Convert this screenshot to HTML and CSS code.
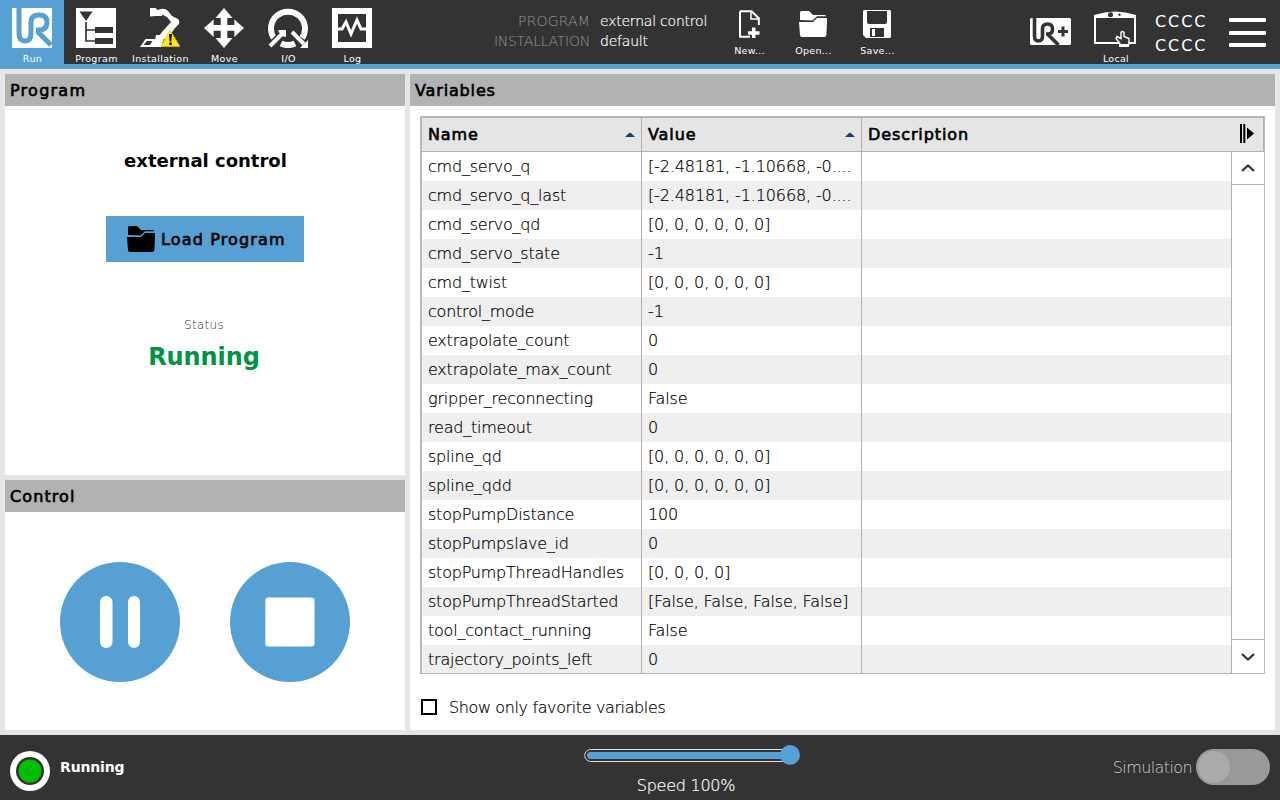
FILE: index.html
```html
<!DOCTYPE html>
<html lang="en">
<head>
<meta charset="utf-8">
<title>Run - external control</title>
<link rel="stylesheet" href="styles.css">
</head>
<body>
<svg width="0" height="0" class="defs">
  <symbol id="folder" viewBox="0 0 28 26">
    <path d="M1 9V1.500Q1 0 2.500 0H10l4 4h11q2 0 2 1.300H18L13.500 9.500z"/>
    <path d="M0 11h14l4-4h10v4l-.6 13q-.1 2-2 2H3q-2 0-2-2z"/>
  </symbol>
</svg>
<header class="topbar">
  <nav class="tabs">
    <a class="tab active"><svg viewBox="0 0 40 40"><path fill="#fff" d="M0 0h40v40H0z"/><path class="ur" d="M7 0v25q0 8 6 8t6-8V14q0-7 8-7t8 7q0 8-8 8h-3M25 23l14 14"/></svg><span>Run</span></a>
    <a class="tab"><svg viewBox="0 0 40 40"><path fill="#fff" d="M0 0h40v40H0z"/><path fill="#333" d="M3.500 3.500h13L10 13zM19 19h18v6H19zM19 30h18v6H19z"/><path d="M10 14v19h9M10 22h9" fill="none" stroke="#333" stroke-width="1.700"/></svg><span>Program</span></a>
    <a class="tab"><svg viewBox="0 0 40 40"><path d="M13 5h9" stroke="#fff" stroke-width="6"/><path fill="#fff" d="M10 0q3-1 6 0l1 2 4-1q4-1 7 2l4 5 6 3q2 2 1 5l-4 4-8 11H17l5-7 9-10-4-5-6-3-4-1-1 3-6 .5V8zM16 27h9l-2 7-4 3h-5z"/><path fill="#fff" fill-rule="evenodd" d="M5.500 31H17l2 4h4l-1 4H0zM7 33l-3.500 4H10l2.500-4z"/><path d="M30 22l10 16.500H21z" fill="#fde910" stroke="#d8c900" stroke-width=".6"/><path d="M29 26h3l-.7 7.500h-1.600zM29.300 34.500h2.500V37h-2.500z" fill="#111"/></svg><span>Installation</span></a>
    <a class="tab"><svg viewBox="0 0 40 40"><path fill="#fff" d="M20 0l8.500 10h-5.200v7h7v-5.500L40 20 30.300 29v-6.300h-7v7.300h5.200L20 40l-8.500-10h5.200v-7.300h-7V29L0 20l9.700-8.500V17h7v-7h-5.200z"/></svg><span>Move</span></a>
    <a class="tab"><svg viewBox="0 0 40 40"><path d="M5.800 30A17 17 0 1 1 34.200 30M13 35.500a17 17 0 0 0 14 0" fill="none" stroke="#fff" stroke-width="6"/><path d="M1.500 38.500L15 25" stroke="#333" stroke-width="7"/><path d="M2 38l13-13M24 24l12 12" stroke="#fff" stroke-width="4"/><path fill="#fff" d="M10.500 22H18v7l-2.500-.5-5-4.500zM40 32v8h-8z"/></svg><span>I/O</span></a>
    <a class="tab"><svg viewBox="0 0 40 40"><path fill="#fff" fill-rule="evenodd" d="M0 0h40v40H0zM6 6v28h28V6z"/><path d="M5 21h5l4-7 5 12 6-14 4 9h6" fill="none" stroke="#fff" stroke-width="3"/></svg><span>Log</span></a>
  </nav>
  <dl class="names"><dt>PROGRAM</dt><dd>external control</dd><dt class="tight">INSTALLATION</dt><dd>default</dd></dl>
  <div class="files">
    <a class="file"><svg viewBox="0 0 28 28"><path d="M5 1.200h11.500l7.300 7V15M5 1.200v25.600h10" fill="none" stroke="#fff" stroke-width="2"/><path d="M16 1v8h8" fill="none" stroke="#fff" stroke-width="1.500"/><path d="M13 23h11.500M18.700 17.500V28.500" stroke="#fff" stroke-width="3.500"/></svg><span>New...</span></a>
    <a class="file"><svg viewBox="0 -1 28 28" fill="#fff"><use href="#folder" width="28" height="26"/></svg><span>Open...</span></a>
    <a class="file"><svg viewBox="0 0 28 28"><path fill="#fff" fill-rule="evenodd" d="M1 0h26l1 1v26l-1 1H3l-3-3V1zM4 1v11q0 2 2 2h16q2 0 2-2V1zM7 18v9h14v-9z"/><path fill="#fff" d="M9 19h3v7H9z"/></svg><span>Save...</span></a>
  </div>
  <div class="tools">
    <svg class="urplus" viewBox="0 0 41 27"><path fill="#fff" d="M1 0h39l1 1v25l-1 1H1l-1-1V1z"/><path d="M4.500 0v18q0 5 4 5t4-5v-7q0-5 5-5t5 5q0 5-4.500 5H16M18 16.500L28.500 27" fill="none" stroke="#333" stroke-width="3.600"/><path d="M28 13.500h10M33 8.500v10" stroke="#333" stroke-width="3"/></svg>
    <a class="local"><svg viewBox="0 0 42 36"><path fill="#fff" fill-rule="evenodd" d="M0 4Q21-3 42 4v29H0zM2 7v24h38V7z"/><circle cx="16.500" cy="3.700" r="2.500" fill="#333"/><circle cx="25.500" cy="3.700" r="1.200" fill="#333"/><path d="M26 35.500v-3l-4-5 1-2 4 2v-6q1.500-2 3 0v4l5 2v6l-1.500 2z" fill="#333" stroke="#fff" stroke-width="1.400"/><path fill="#fff" d="M25 33h10v3H25z"/></svg><span>Local</span></a>
    <div class="cccc">CCCC<br>CCCC</div>
    <div class="menu"><i></i><i></i><i></i></div>
  </div>
</header>
<main>
  <div class="left">
    <section class="panel program">
      <h2>Program</h2>
      <div class="prog-name">external control</div>
      <button class="load"><svg viewBox="0 0 28 26"><use href="#folder" width="28" height="26"/></svg><span>Load Program</span></button>
      <div class="status-label">Status</div>
      <div class="status">Running</div>
    </section>
    <section class="panel control">
      <h2>Control</h2>
      <div class="buttons">
        <svg viewBox="0 0 120 120"><circle cx="60" cy="60" r="60" fill="#56a0d3"/><rect x="40" y="34" width="12.500" height="52" rx="6" fill="#fff"/><rect x="68" y="34" width="12" height="52" rx="6" fill="#fff"/></svg>
        <svg viewBox="0 0 120 120"><circle cx="60" cy="60" r="60" fill="#56a0d3"/><rect x="35.300" y="35.500" width="49.200" height="49" rx="3" fill="#fff"/></svg>
      </div>
    </section>
  </div>
  <section class="panel variables">
    <h2>Variables</h2>
    <div class="table">
      <div class="thead">
        <div class="th">Name<svg viewBox="0 0 10 5"><path d="M0 5l4-4h2l4 4z" fill="#243f5b"/></svg></div>
        <div class="th">Value<svg viewBox="0 0 10 5"><path d="M0 5l4-4h2l4 4z" fill="#243f5b"/></svg></div>
        <div class="th">Description</div>
        <svg class="expand" viewBox="0 0 14 19"><path d="M0 0h2v19H0zM3.300 0h2v19h-2zM7 3.500l7 6-7 6z"/></svg>
      </div>
      <div class="tbody">
        <div class="rows">
          <div class="row"><span>cmd_servo_q</span><span>[-2.48181, -1.10668, -0....</span><span></span></div>
          <div class="row"><span>cmd_servo_q_last</span><span>[-2.48181, -1.10668, -0....</span><span></span></div>
          <div class="row"><span>cmd_servo_qd</span><span>[0, 0, 0, 0, 0, 0]</span><span></span></div>
          <div class="row"><span>cmd_servo_state</span><span>-1</span><span></span></div>
          <div class="row"><span>cmd_twist</span><span>[0, 0, 0, 0, 0, 0]</span><span></span></div>
          <div class="row"><span>control_mode</span><span>-1</span><span></span></div>
          <div class="row"><span>extrapolate_count</span><span>0</span><span></span></div>
          <div class="row"><span>extrapolate_max_count</span><span>0</span><span></span></div>
          <div class="row"><span>gripper_reconnecting</span><span>False</span><span></span></div>
          <div class="row"><span>read_timeout</span><span>0</span><span></span></div>
          <div class="row"><span>spline_qd</span><span>[0, 0, 0, 0, 0, 0]</span><span></span></div>
          <div class="row"><span>spline_qdd</span><span>[0, 0, 0, 0, 0, 0]</span><span></span></div>
          <div class="row"><span>stopPumpDistance</span><span>100</span><span></span></div>
          <div class="row"><span>stopPumpslave_id</span><span>0</span><span></span></div>
          <div class="row"><span>stopPumpThreadHandles</span><span>[0, 0, 0, 0]</span><span></span></div>
          <div class="row"><span>stopPumpThreadStarted</span><span>[False, False, False, False]</span><span></span></div>
          <div class="row"><span>tool_contact_running</span><span>False</span><span></span></div>
          <div class="row"><span>trajectory_points_left</span><span>0</span><span></span></div>
        </div>
        <div class="scroll">
          <div class="arrow"><svg viewBox="0 0 14 8"><path d="M1 7l6-5.500L13 7"/></svg></div>
          <div class="arrow down"><svg viewBox="0 0 14 8"><path d="M1 1l6 5.500L13 1"/></svg></div>
        </div>
      </div>
    </div>
    <label class="favorite"><i></i><span>Show only favorite variables</span></label>
  </section>
</main>
<footer>
  <div class="state"><svg viewBox="0 0 40 40"><circle cx="20" cy="20" r="20" fill="#fff"/><circle cx="20" cy="20" r="14" fill="#333"/><circle cx="20" cy="20" r="11.500" fill="#00be00"/></svg><span>Running</span></div>
  <div class="speed">
    <svg viewBox="0 0 216 20"><rect x=".7" y="4.500" width="208" height="12" rx="6" fill="#333" stroke="#ddd"/><rect x="3" y="7" width="205" height="7" rx="3.500" fill="#56a0d3"/><circle cx="206" cy="10" r="10" fill="#56a0d3"/></svg>
    <span>Speed 100%</span>
  </div>
  <div class="simulation"><span>Simulation</span><div class="toggle"><i></i></div></div>
</footer>
</body>
</html>
```

FILE: styles.css
```css
* { box-sizing: border-box; }
body { margin: 0; width: 1280px; height: 800px; overflow: hidden; display: flex; flex-direction: column; background: #e5e5e5; color: #000; font: 16px/20px "DejaVu Sans", sans-serif; }
svg { display: block; flex: none; }
.defs { position: absolute; }
h2, dl, dd { margin: 0; }

.topbar { height: 69px; display: flex; background: #333; border-bottom: 5px solid #56a0d3; color: #fff; }
.tabs { display: flex; }
.tab { width: 64px; height: 64px; padding-top: 8px; display: flex; flex-direction: column; align-items: center; font-size: 9.500px; line-height: 12px; gap: 5px; letter-spacing: .35px; white-space: nowrap; }
.tab span { padding-left: 1px; }
.tab svg { width: 40px; height: 40px; }
.tab.active { background: #56a0d3; }
.ur { fill: none; stroke: #56a0d3; stroke-width: 5; }
.names { display: grid; grid-template-columns: 120px auto; column-gap: 10px; align-content: start; margin-left: 86px; padding-top: 11px; width: 247px; font-size: 14px; font-weight: 200; white-space: nowrap; }
.names dt { text-align: right; color: #999; letter-spacing: .15px; }
.names dt.tight { letter-spacing: -.25px; }
.names dd { letter-spacing: -.22px; -webkit-text-stroke: .2px #fff; }
.files { display: flex; }
.file { width: 64px; padding-top: 10px; display: flex; flex-direction: column; align-items: center; gap: 6px; font-size: 9.500px; line-height: 13px; letter-spacing: .3px; }
.file span { padding-left: 1px; }
.file svg { width: 28px; height: 28px; }
.tools { display: flex; margin-left: 121px; }
.urplus { width: 41px; height: 27px; margin-top: 18px; }
.local { width: 42px; margin-left: 23px; padding-top: 11px; display: flex; flex-direction: column; align-items: center; gap: 5px; font-size: 9.500px; line-height: 13px; letter-spacing: .3px; }
.local span { padding-left: 2px; }
.local svg { width: 42px; height: 36px; }
.cccc { margin: 10px 0 0 19px; width: 53px; font-size: 16px; line-height: 24px; letter-spacing: 1.900px; }
.menu { margin: 18px 0 0 21px; width: 37px; display: flex; flex-direction: column; gap: 8.500px; }
.menu i { height: 4px; background: #fff; border-radius: 1px; }

main { height: 666px; padding: 5px; display: flex; gap: 5px; }
.left { width: 400px; display: flex; flex-direction: column; gap: 5px; }
.panel { background: #fff; display: flex; flex-direction: column; }
h2 { height: 32px; padding: 1px 5px 0; background: #b2b2b2; font-size: 16px; line-height: 32px; font-weight: 400; letter-spacing: 1.250px; -webkit-text-stroke: .65px #000; }
.variables h2 { letter-spacing: .85px; }
.control h2 { letter-spacing: 1.100px; }
.program { height: 401px; align-items: center; }
.program h2 { align-self: stretch; }
.prog-name { margin-top: 45px; padding-left: 1px; font-size: 18px; font-weight: 700; }
.load { margin-top: 45px; width: 198px; height: 46px; border: 0; background: #56a0d3; color: #000; display: flex; align-items: center; gap: 6px; padding: 0 0 0 21px; font: 16px "DejaVu Sans", sans-serif; letter-spacing: 1.150px; -webkit-text-stroke: .65px #000; white-space: nowrap; }
.load svg { width: 28px; height: 26px; }
.status-label { margin-top: 53px; padding-right: 2px; font-size: 12px; font-weight: 200; letter-spacing: .3px; color: #333; }
.status { margin-top: 10px; padding-right: 2px; font-size: 24px; line-height: 24px; font-weight: 700; letter-spacing: -.1px; color: #009344; }
.control { height: 250px; }
.buttons { display: flex; gap: 50px; justify-content: center; padding-top: 50px; }
.buttons svg { width: 120px; height: 120px; }

.variables { width: 865px; }
.table { margin: 10px 10px 0; width: 845px; height: 558px; border: 1px solid #b9b9b9; border-left-width: 2px; }
.thead { height: 35px; display: grid; grid-template-columns: 220px 220px 378px 14px; align-items: center; background: #e5e5e5; border: solid #b2b2b2; border-width: 1px 1px 1px 0; }
.th { height: 33px; display: flex; align-items: center; justify-content: space-between; padding: 0 6px; letter-spacing: .9px; -webkit-text-stroke: .65px #000; border-right: 1px solid #b2b2b2; }
.th:nth-child(3) { border: 0; }
.th svg { width: 10px; height: 5px; margin-bottom: 1px; -webkit-text-stroke: 0; }
.expand { width: 14px; height: 19px; margin-bottom: 2px; }
.tbody { height: 521px; display: flex; overflow: hidden; }
.rows { width: 809px; font-weight: 200; -webkit-text-stroke: .2px #000; }
.row { height: 29px; display: grid; grid-template-columns: 220px 220px 369px; line-height: 29px; letter-spacing: -.12px; white-space: nowrap; }
.row:nth-child(even) { background: #efefef; }
.row span { padding-left: 6px; border-right: 1px solid #b2b2b2; }
.row span:first-child { letter-spacing: -.22px; }
.row span:last-child { border: 0; }
.scroll { width: 33px; border-left: 1px solid #b2b2b2; display: flex; flex-direction: column; justify-content: space-between; }
.arrow { height: 33px; border-bottom: 1px solid #b2b2b2; display: flex; align-items: center; justify-content: center; }
.arrow.down { height: 34px; border: 0; border-top: 1px solid #b2b2b2; }
.arrow svg { width: 14px; height: 8px; fill: none; stroke: #333; stroke-width: 2.2; }
.favorite { margin: 23px 0 0 11px; display: flex; align-items: flex-start; gap: 12px; font-weight: 200; letter-spacing: -.38px; -webkit-text-stroke: .2px #000; }
.favorite span { padding-top: 1px; }
.favorite i { width: 16px; height: 16px; margin-top: 2px; border: 2px solid #000; }

footer { height: 65px; background: #333; color: #fff; display: grid; grid-template-columns: 584px 216px 1fr; }
.state { display: flex; gap: 10px; padding: 16px 0 0 10px; font-size: 14px; font-weight: 700; line-height: 33px; letter-spacing: -.15px; }
.state svg { width: 40px; height: 40px; }
.speed { padding-top: 10px; }
.speed svg { width: 216px; height: 20px; }
.speed span { display: block; width: 204px; margin-top: 11px; text-align: center; font-weight: 200; letter-spacing: -.25px; -webkit-text-stroke: .2px #fff; }
.simulation { padding: 14px 10px 0 0; display: flex; justify-content: flex-end; gap: 4px; font-weight: 200; line-height: 37px; letter-spacing: -.6px; color: #ccc; }
.toggle { width: 74px; height: 36px; border-radius: 18px; background: #999; padding: 2px; }
.toggle i { display: block; width: 32px; height: 32px; border-radius: 50%; background: #aaa; }
```
